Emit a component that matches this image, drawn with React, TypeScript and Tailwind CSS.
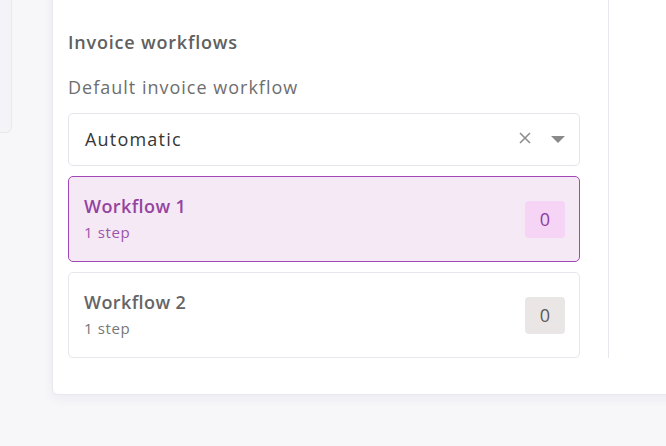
interface Workflow {
  name: string;
  steps: number;
  count: number;
}

const workflows: Workflow[] = [
  { name: 'Workflow 1', steps: 1, count: 0 },
  { name: 'Workflow 2', steps: 1, count: 0 },
];

function WorkflowCard({ workflow, active }: { workflow: Workflow; active?: boolean }) {
  return (
    <div
      className={
        active
          ? 'flex items-center justify-between rounded-[5px] border border-[#a346b6] bg-[#f6e9f6] pl-[15px] pr-[14px] h-[86px]'
          : 'flex items-center justify-between rounded-[5px] border border-[#e6e6ec] bg-white pl-[15px] pr-[14px] h-[86px]'
      }
    >
      <div className="flex flex-col">
        <span
          className={
            active
              ? 'text-[18px] leading-[26px] font-semibold tracking-[0.4px] text-[#94449f]'
              : 'text-[18px] leading-[26px] font-semibold tracking-[0.4px] text-[#656565]'
          }
        >
          {workflow.name}
        </span>
        <span
          className={
            active
              ? 'text-[15px] leading-[26px] tracking-[0.6px] text-[#9b55aa]'
              : 'text-[15px] leading-[26px] tracking-[0.6px] text-[#777]'
          }
        >
          {workflow.steps} step
        </span>
      </div>
      <div
        className={
          active
            ? 'flex h-[37px] w-[40px] items-center justify-center rounded-[4px] bg-[#f6d4f6] text-[18px] text-[#8e3c9f]'
            : 'flex h-[37px] w-[40px] items-center justify-center rounded-[4px] bg-[#ebe6e6] text-[18px] text-[#5a5a5a]'
        }
      >
        {workflow.count}
      </div>
    </div>
  );
}

export default function App() {
  return (
    <div
      className="flex h-[446px] w-full items-start overflow-hidden bg-[#f7f7fa]"
      style={{ fontFamily: '"Open Sans", "Noto Sans", sans-serif' }}
    >
      <div className="h-[133px] w-[12px] shrink-0 rounded-br-[6px] border-r border-b border-[#e8e8ee] bg-[#f4f4f8]" />
      <div className="ml-[40px] mt-[-20px] w-[700px] shrink-0 rounded-b-[6px] border border-[#e8e8ee] bg-white pb-[36px] pl-[15px] shadow-[0_4px_12px_rgba(40,40,80,0.05)]">
        <div className="flex">
          <div className="w-[541px] border-r border-[#e6e6ec] pr-[28px] pt-[48px]">
            <h2 className="text-[18px] leading-[27px] font-semibold tracking-[0.8px] text-[#606060]">Invoice workflows</h2>
            <p className="mt-[18px] text-[18px] leading-[26px] tracking-[1px] text-[#6e6e6e]">Default invoice workflow</p>
            <div className="mt-[13px] flex h-[53px] items-center rounded-[5px] border border-[#e4e4ea] bg-white pl-[16px] pr-[14px]">
              <span className="flex-1 text-[18px] tracking-[1.2px] text-[#363636]">Automatic</span>
              <svg width="12" height="12" viewBox="0 0 12 12" className="mb-[3px]">
                <path d="M1 1L11 11M11 1L1 11" stroke="#8a8a8a" strokeWidth="1.5" />
              </svg>
              <svg className="ml-[20px]" width="14" height="7" viewBox="0 0 14 7">
                <path d="M0 0h14L7 7z" fill="#8a8a8a" />
              </svg>
            </div>
            <div className="mt-[10px] flex flex-col gap-[10px]">
              {workflows.map((w, i) => (
                <WorkflowCard key={w.name} workflow={w} active={i === 0} />
              ))}
            </div>
          </div>
          <div className="flex-1" />
        </div>
      </div>
    </div>
  );
}
